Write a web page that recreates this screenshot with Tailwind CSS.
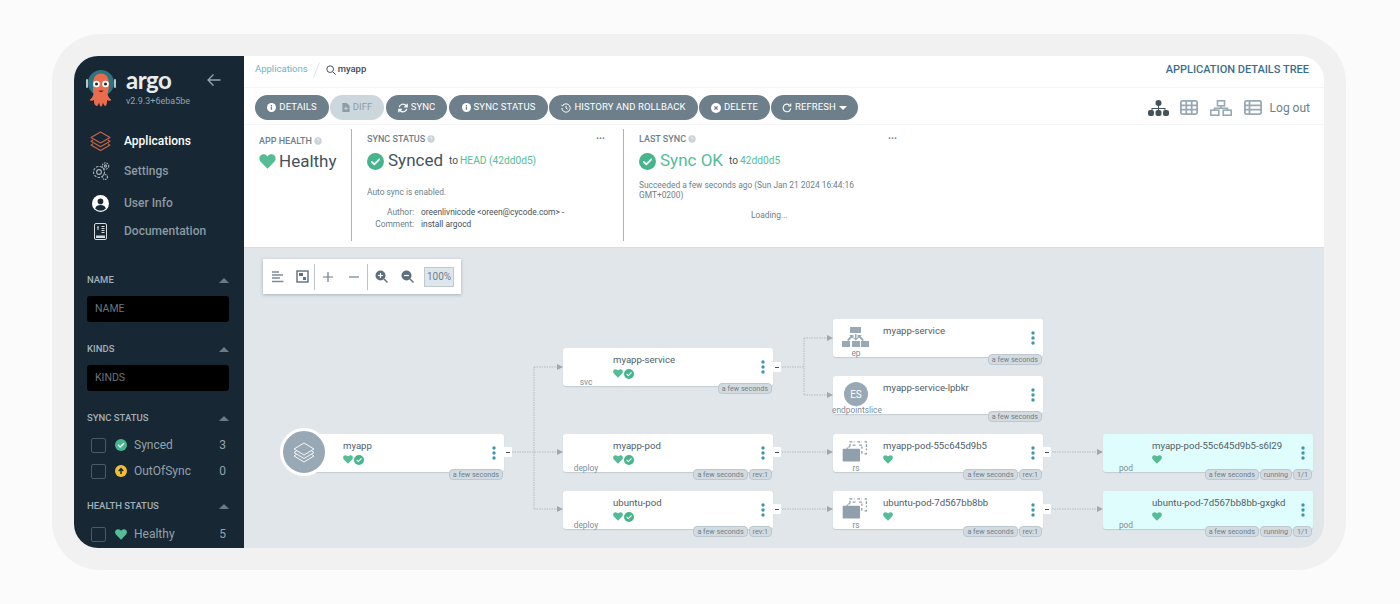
<!doctype html>
<html lang="en">
<head>
<meta charset="utf-8">
<title>Argo CD application details</title>
<script src="https://cdn.jsdelivr.net/npm/@tailwindcss/browser@4"></script>
</head>
<body class="w-[1400px] h-[604px] overflow-hidden bg-[#fbfbfb] font-['Roboto',sans-serif]">
<svg class="hidden" aria-hidden="true">
  <symbol id="heart" viewBox="0 0 24 22"><path fill="#55bd96" d="M12 21.5 2.300 11.600C-.6 8.700-.6 4.300 2 1.900c2.500-2.300 6.600-1.900 9 .6l1 1 1-1c2.400-2.500 6.500-2.900 9-.6 2.600 2.400 2.600 6.800-.3 9.700z"/></symbol>
  <symbol id="check" viewBox="0 0 24 24"><circle cx="12" cy="12" r="12" fill="#45b58c"/><path d="M6.800 12.500l3.500 3.500 7-7" fill="none" stroke="#fff" stroke-width="2.600" stroke-linecap="round" stroke-linejoin="round"/></symbol>
  <symbol id="dots" viewBox="0 0 4 14"><circle cx="2" cy="2" r="1.700" fill="#3f97a8"/><circle cx="2" cy="7" r="1.700" fill="#3f97a8"/><circle cx="2" cy="12" r="1.700" fill="#3f97a8"/></symbol>
  <symbol id="info" viewBox="0 0 24 24"><circle cx="12" cy="12" r="12" fill="currentColor"/><path d="M10 10h3.500v8H10zM10.200 5.500h3.300v3h-3.300z" fill="#6d7f8b"/></symbol>
  <symbol id="rs" viewBox="0 0 27 23"><path d="M8 6V1h5M16 1h5M24 1h2v9M26 13v1h-3M5 10V6.500h3M11 4.500h4M18 4.500h3v4M21 11v3" fill="none" stroke="#8f9fab" stroke-width="1.400" stroke-dasharray="3 1.600"/><rect x="0" y="8.500" width="19" height="14" rx="1" fill="#8f9fab"/></symbol>
  <symbol id="q" viewBox="0 0 24 24"><circle cx="12" cy="12" r="11" fill="#c9d2d8"/><path d="M9 9.500a3 3 0 1 1 4.500 2.600c-1 .6-1.500 1.200-1.500 2.400M12 17v1.500" fill="none" stroke="#fff" stroke-width="2"/></symbol>
</svg>

<main class="ml-[52px] mt-[34px] w-[1294px] h-[536px] rounded-[48px] bg-[#f1f1f1] p-[22px]">
  <div class="flex h-[492px] w-[1250px] overflow-hidden rounded-[24px] bg-white">

    <!-- Sidebar -->
    <aside class="w-[170px] shrink-0 overflow-hidden bg-[#172733] text-[#8b9aa5]">
      <div class="relative flex h-[72px] pl-[12px] pt-[14px]">
        <svg class="h-[38px] w-[30px] shrink-0" viewBox="0 0 30 38">
          <circle cx="15" cy="13" r="13" fill="#2f7280"/>
          <rect x="0" y="9" width="2" height="9" rx="1" fill="#b9c6cc"/><rect x="28" y="9" width="2" height="9" rx="1" fill="#b9c6cc"/>
          <path d="M7 15C7 7 10 3.500 15 3.500S23 7 23 15c0 4-1 7-1.500 9 .5 3 2.500 5 4 6-1.500 1.500-3.500.5-4.500 0 0 3 0 5-1.500 6-1.500 0-2-2-2.500-3.500-.5 2-1 4-2 4s-1.500-2-2-4c-.5 1.500-1 3.500-2.500 3.500C8 35 8 33 8 30c-1 .5-3 1.500-4.500 0 1.500-1 3.500-3 4-6C7 22 7 19 7 15z" fill="#e96d4c"/>
          <circle cx="10.500" cy="14" r="3.300" fill="#fff"/><circle cx="19.500" cy="14" r="3.300" fill="#fff"/>
          <circle cx="10.500" cy="14" r="1.500" fill="#172733"/><circle cx="19.500" cy="14" r="1.500" fill="#172733"/>
          <path d="M12.500 20.500c1.500 2.200 3.500 2.200 5 0z" fill="#5b2418"/>
        </svg>
        <div class="ml-[10px]">
          <div class="h-[24px] text-[24px] leading-[20px] font-bold tracking-[-0.5px] text-[#e8ecee] font-['Lato',sans-serif]">argo</div>
          <div class="mt-[1px] text-[9px] leading-[12px] text-[#94a3ae]">v2.9.3+6eba5be</div>
        </div>
        <svg class="absolute left-[133px] top-[17px] h-[14px] w-[14px]" viewBox="0 0 14 14" fill="none" stroke="#94a3ae" stroke-width="1.400"><path d="M13.500 7H1M6.500 1.500 1 7l5.500 5.500"/></svg>
      </div>

      <nav class="text-[12px] font-medium">
        <div class="flex h-[26px] items-center pl-[16px] text-white">
          <svg class="mr-[13px] h-[20px] w-[21px]" viewBox="0 0 21 20" fill="none" stroke="#c5654a" stroke-width="1.100" stroke-linejoin="round"><path d="M10.500 1 20 6.500l-9.500 5.500L1 6.500zM3 9 1 10.300 10.500 15.800 20 10.300 18 9M3 12.800l-2 1.300 9.500 5.500 9.500-5.500-2-1.300"/></svg>Applications
        </div>
        <div class="mt-[4px] flex h-[26px] items-center pl-[16px]">
          <svg class="mr-[13px] h-[20px] w-[21px]" viewBox="0 0 21 20" fill="none" stroke="#a9b4bc" stroke-width="1.100"><circle cx="9" cy="11" r="5.500" stroke-dasharray="2.500 1.200"/><circle cx="9" cy="11" r="2.400"/><circle cx="15.500" cy="5" r="3.200" stroke-dasharray="1.700 .9"/><circle cx="15.500" cy="5" r="1.100"/><circle cx="15" cy="16" r="2.500" stroke-dasharray="1.500 .8"/></svg>Settings
        </div>
        <div class="mt-[6px] flex h-[26px] items-center pl-[16px]">
          <svg class="ml-[2px] mr-[15px] h-[17px] w-[17px]" viewBox="0 0 24 24"><circle cx="12" cy="12" r="12" fill="#fff"/><circle cx="12" cy="9" r="4" fill="#172733"/><path d="M4.500 19c1-4 4-5 7.500-5s6.500 1 7.500 5a10 10 0 0 1-15 0z" fill="#172733"/></svg>User Info
        </div>
        <div class="mt-[2px] flex h-[26px] items-center pl-[16px]">
          <svg class="ml-[4px] mr-[17px] h-[17px] w-[13px]" viewBox="0 0 13 17" fill="none" stroke="#d5dbdf" stroke-width="1"><rect x=".5" y=".5" width="12" height="16" rx="1.500"/><path d="M3 4h2M4 4v3M7.500 3.500h3M7.500 5.500h3M7.500 7.500h3M7.500 9.500h3"/><rect x="2" y="12.500" width="9" height="2.500" fill="#d5dbdf" stroke="none"/></svg>Documentation
        </div>
      </nav>

      <section class="mt-[30px] pl-[13px] pr-[15px] text-[9.500px] font-medium">
        <div class="flex h-[12px] items-center justify-between leading-none text-[#a3b0b9]">NAME<span class="h-0 w-0 border-x-[5px] border-b-[5px] border-x-transparent border-b-[#6a7a86]"></span></div>
        <div class="mt-[10px] flex h-[26px] items-center rounded-[3px] bg-black pl-[8px] text-[10.500px] font-normal text-[#69767f]">NAME</div>
      </section>
      <section class="mt-[21px] pl-[13px] pr-[15px] text-[9.500px] font-medium">
        <div class="flex h-[12px] items-center justify-between leading-none text-[#a3b0b9]">KINDS<span class="h-0 w-0 border-x-[5px] border-b-[5px] border-x-transparent border-b-[#6a7a86]"></span></div>
        <div class="mt-[10px] flex h-[26px] items-center rounded-[3px] bg-black pl-[8px] text-[10.500px] font-normal text-[#69767f]">KINDS</div>
      </section>
      <section class="mt-[21px] pl-[13px] pr-[15px]">
        <div class="flex h-[12px] items-center justify-between text-[9.500px] font-medium leading-none text-[#a3b0b9]">SYNC STATUS<span class="h-0 w-0 border-x-[5px] border-b-[5px] border-x-transparent border-b-[#6a7a86]"></span></div>
        <div class="mt-[13px] flex h-[16px] items-center text-[12px] text-[#93a2ac]">
          <span class="ml-[4px] h-[15px] w-[15px] rounded-[2px] border border-[#4b5a65]"></span>
          <svg class="ml-[9px] mr-[7px] h-[12px] w-[12px]"><use href="#check"/></svg>Synced<span class="ml-auto mr-[3px]">3</span>
        </div>
        <div class="mt-[10px] flex h-[16px] items-center text-[12px] text-[#93a2ac]">
          <span class="ml-[4px] h-[15px] w-[15px] rounded-[2px] border border-[#4b5a65]"></span>
          <svg class="ml-[9px] mr-[7px] h-[12px] w-[12px]" viewBox="0 0 24 24"><circle cx="12" cy="12" r="12" fill="#f4c030"/><path d="M12 18V8M7.500 12 12 7l4.500 5" fill="none" stroke="#172733" stroke-width="3"/></svg>OutOfSync<span class="ml-auto mr-[3px]">0</span>
        </div>
      </section>
      <section class="mt-[21px] pl-[13px] pr-[15px]">
        <div class="flex h-[12px] items-center justify-between text-[9.500px] font-medium leading-none text-[#a3b0b9]">HEALTH STATUS<span class="h-0 w-0 border-x-[5px] border-b-[5px] border-x-transparent border-b-[#6a7a86]"></span></div>
        <div class="mt-[14px] flex h-[16px] items-center text-[12px] text-[#93a2ac]">
          <span class="ml-[4px] h-[15px] w-[15px] rounded-[2px] border border-[#4b5a65]"></span>
          <svg class="ml-[9px] mr-[7px] h-[11px] w-[12px]"><use href="#heart"/></svg>Healthy<span class="ml-auto mr-[3px]">5</span>
        </div>
      </section>
    </aside>

    <!-- Main column -->
    <div class="flex min-w-0 flex-1 flex-col">
      <header class="flex h-[32px] shrink-0 items-center border-b border-[#f3f5f6] pb-[3px] pl-[11px] pr-[15px]">
        <span class="mb-[2px] text-[9.500px] text-[#6db3c4]">Applications</span>
        <span class="ml-[8px] h-[16px] w-px rotate-[22deg] bg-[#dfe4e7]"></span>
        <svg class="ml-[9px] h-[10px] w-[10px]" viewBox="0 0 12 12" fill="none" stroke="#44525c" stroke-width="1.200"><circle cx="5" cy="5" r="4"/><path d="m8 8 3.500 3.500"/></svg>
        <span class="ml-[2px] mb-[2px] text-[9.500px] font-medium text-[#3f4c55]">myapp</span>
        <span class="ml-auto text-[11px] font-medium text-[#3c6e8a]">APPLICATION DETAILS TREE</span>
      </header>

      <div class="flex h-[37px] shrink-0 items-center border-b border-[#f3f5f6] pl-[11px] pr-[14px] pt-[3px] text-[9.500px] tracking-[0.1px] text-white">
        <div class="flex h-[25px] items-stretch">
          <span class="flex w-[74px] items-center justify-center gap-[3px] rounded-full bg-[#6d7f8b]"><svg class="h-[9px] w-[9px] text-white"><use href="#info"/></svg>DETAILS</span>
          <span class="ml-[1px] flex w-[54px] items-center justify-center gap-[3px] rounded-full bg-[#ccd6dd] text-[#8e9ca6]"><svg class="h-[9px] w-[8px]" viewBox="0 0 8 10"><path d="M0 0h5l3 3v7H0z" fill="#8e9ca6"/><path d="M4 4v4M2 6h4" stroke="#ccd6dd"/></svg>DIFF</span>
          <span class="ml-[2px] flex w-[61px] items-center justify-center gap-[3px] rounded-full bg-[#6d7f8b]"><svg class="h-[10px] w-[10px]" viewBox="0 0 12 12" fill="none" stroke="#fff" stroke-width="1.500"><path d="M1.500 5a4.600 4.600 0 0 1 8-2l1.500 1.500M10.500 7a4.600 4.600 0 0 1-8 2L1 7.500M11 1v3.500H7.500M1 11V7.500h3.500"/></svg>SYNC</span>
          <span class="ml-[2px] flex w-[99px] items-center justify-center gap-[3px] rounded-full bg-[#6d7f8b]"><svg class="h-[9px] w-[9px] text-white"><use href="#info"/></svg>SYNC STATUS</span>
          <span class="ml-[1px] flex w-[149px] items-center justify-center gap-[3px] rounded-full bg-[#6d7f8b]"><svg class="h-[10px] w-[10px]" viewBox="0 0 12 12" fill="none" stroke="#fff" stroke-width="1.200"><path d="M2 3a5 5 0 1 1-1 3M.5 2.500 2 3.500l1-1.500M6 3.500V6l2 1.500"/></svg>HISTORY AND ROLLBACK</span>
          <span class="ml-[1px] flex w-[71px] items-center justify-center gap-[3px] rounded-full bg-[#6d7f8b]"><svg class="h-[10px] w-[10px]" viewBox="0 0 24 24"><circle cx="12" cy="12" r="12" fill="#fff"/><path d="m8 8 8 8m0-8-8 8" stroke="#6d7f8b" stroke-width="3"/></svg>DELETE</span>
          <span class="ml-[1px] flex w-[87px] items-center justify-center gap-[3px] rounded-full bg-[#6d7f8b]"><svg class="h-[10px] w-[10px]" viewBox="0 0 12 12" fill="none" stroke="#fff" stroke-width="1.300"><path d="M10.500 6.500A4.600 4.600 0 1 1 9 2.500M10.500.5v3H7.500"/></svg>REFRESH<span class="h-0 w-0 border-x-[4px] border-t-[4px] border-x-transparent border-t-white"></span></span>
        </div>
        <div class="ml-auto flex items-center">
          <svg class="h-[16px] w-[21px]" viewBox="0 0 21 16" fill="#44525c"><circle cx="10.500" cy="3" r="3"/><path d="M10 5h1v5h-1zM3.500 8h14v2.500h-1V9h-12v1.500h-1z"/><rect x="0" y="10" width="6" height="6" rx="2"/><rect x="7.500" y="10" width="6" height="6" rx="2"/><rect x="15" y="10" width="6" height="6" rx="2"/></svg>
          <svg class="ml-[11px] h-[15px] w-[18px]" viewBox="0 0 18 15" fill="none" stroke="#98a9b5" stroke-width="1.800"><rect x=".9" y=".9" width="16.200" height="13.200" rx="1.500"/><path d="M.5 5.300h17M.5 9.700h17M6.300.5v14M11.700.5v14"/></svg>
          <svg class="ml-[12px] h-[16px] w-[22px]" viewBox="0 0 22 16" fill="none" stroke="#98a9b5" stroke-width="1.600"><rect x="7.500" y=".8" width="7" height="5"/><rect x=".8" y="10.200" width="8" height="5"/><rect x="13.200" y="10.200" width="8" height="5"/><path d="M11 5.700v2.500M4.500 10.300V8.200h13v2.100"/></svg>
          <svg class="ml-[12px] h-[15px] w-[18px]" viewBox="0 0 18 15" fill="none" stroke="#98a9b5" stroke-width="1.800"><rect x=".9" y=".9" width="16.200" height="13.200" rx="1.500"/><path d="M.5 5.300h17M.5 9.700h17M5.500.5v14"/></svg>
          <span class="ml-[8px] text-[12px] tracking-normal text-[#6d7f8b]">Log out</span>
        </div>
      </div>

      <!-- Status panels -->
      <div class="flex h-[123px] shrink-0 items-start border-b border-[#d8dee2] pt-[4px] text-[#6d7f8b]">
        <div class="w-[107px] shrink-0 pl-[15px]">
          <div class="mt-[6px] flex items-center gap-[2px] text-[9px] font-medium leading-[12px]">APP HEALTH<svg class="h-[8px] w-[8px]"><use href="#q"/></svg></div>
          <div class="mt-[2px] flex items-center gap-[3px] text-[17px] leading-[24px] text-[#44525c]"><svg class="h-[15px] w-[17px]"><use href="#heart"/></svg>Healthy</div>
        </div>
        <div class="relative h-[112px] w-[272px] shrink-0 border-l border-[#a9b3ba] pl-[15px]">
          <div class="mt-[4px] flex items-center gap-[2px] text-[9px] font-medium leading-[12px]">SYNC STATUS<svg class="h-[8px] w-[8px]"><use href="#q"/></svg></div>
          <span class="absolute left-[244px] top-[5px] text-[10px] font-bold leading-[10px]">···</span>
          <div class="mt-[4px] flex h-[24px] items-center text-[#44525c]">
            <svg class="mr-[4px] h-[17px] w-[17px]"><use href="#check"/></svg><span class="text-[17px]">Synced</span>
            <span class="ml-[6px] text-[10.200px]">to</span><span class="ml-[2px] text-[10.200px] text-[#55bd96]">HEAD (42dd0d5)</span>
          </div>
          <p class="mt-[13px] text-[8.400px] leading-[12px]">Auto sync is enabled.</p>
          <dl class="mt-[8px] grid grid-cols-[47px_1fr] gap-x-[7px] text-[8.400px] leading-[12px]">
            <dt class="text-right">Author:</dt><dd class="text-[#44525c]">oreenlivnicode &lt;oreen@cycode.com&gt; -</dd>
            <dt class="text-right">Comment:</dt><dd class="text-[#44525c]">install argocd</dd>
          </dl>
        </div>
        <div class="relative h-[112px] w-[300px] shrink-0 border-l border-[#a9b3ba] pl-[15px]">
          <div class="mt-[4px] flex items-center gap-[2px] text-[9px] font-medium leading-[12px]">LAST SYNC<svg class="h-[8px] w-[8px]"><use href="#q"/></svg></div>
          <span class="absolute left-[264px] top-[5px] text-[10px] font-bold leading-[10px]">···</span>
          <div class="mt-[4px] flex h-[24px] items-center">
            <svg class="mr-[4px] h-[17px] w-[17px]"><use href="#check"/></svg><span class="text-[17px] text-[#55bd96]">Sync OK</span>
            <span class="ml-[6px] text-[10.200px] text-[#44525c]">to</span><span class="ml-[2px] text-[10.200px] text-[#55bd96]">42dd0d5</span>
          </div>
          <p class="mt-[7px] w-[225px] text-[8.400px] leading-[10px]">Succeeded a few seconds ago (Sun Jan 21 2024 16:44:16 GMT+0200)</p>
          <p class="mt-[10px] ml-[112px] text-[8.400px] leading-[10px]">Loading...</p>
        </div>
      </div>

      <!-- Graph canvas -->
      <div class="relative min-h-0 flex-1 overflow-hidden bg-[#e0e6ea]">
        <div class="absolute left-[19px] top-[11px] flex h-[35px] w-[198px] items-center bg-white shadow-[0_1px_3px_rgba(90,110,125,.45)]">
          <svg class="ml-[9px] h-[12px] w-[12px]" viewBox="0 0 12 12" stroke="#7d8d98" stroke-width="1.300"><path d="M0 1h7M0 4h11M0 7h8M0 10.500h11.500"/></svg>
          <svg class="ml-[12px] h-[13px] w-[13px]" viewBox="0 0 13 13"><rect x="1" y="1" width="11" height="11" fill="none" stroke="#5f707c" stroke-width="1.400"/><path d="M3 3h4v3H3zM7 7h3v3H7z" fill="#5f707c"/></svg>
          <span class="ml-[5px] h-[26px] w-px bg-[#b9c3ca]"></span>
          <svg class="ml-[8px] h-[10px] w-[10px]" viewBox="0 0 10 10" stroke="#6d7f8b" stroke-width="1.200"><path d="M5 0v10M0 5h10"/></svg>
          <svg class="ml-[16px] h-[10px] w-[10px]" viewBox="0 0 10 10" stroke="#6d7f8b" stroke-width="1.200"><path d="M0 5h10"/></svg>
          <span class="ml-[8px] h-[26px] w-px bg-[#b9c3ca]"></span>
          <svg class="ml-[7px] h-[13px] w-[13px]" viewBox="0 0 13 13"><circle cx="5.500" cy="5.500" r="5" fill="#5f707c"/><path d="M3 5.500h5M5.500 3v5" stroke="#fff" stroke-width="1.200"/><path d="m9 9 3.500 3.500" stroke="#5f707c" stroke-width="1.400"/></svg>
          <svg class="ml-[13px] h-[13px] w-[13px]" viewBox="0 0 13 13"><circle cx="5.500" cy="5.500" r="5" fill="#5f707c"/><path d="M3 5.500h5" stroke="#fff" stroke-width="1.200"/><path d="m9 9 3.500 3.500" stroke="#5f707c" stroke-width="1.400"/></svg>
          <span class="ml-[10px] flex h-[20px] w-[30px] items-center justify-center border border-[#bfc9d0] bg-[#dee6eb] text-[10px] text-[#6d7f8b]">100%</span>
        </div>

        <svg class="absolute inset-0 h-full w-full" viewBox="0 0 1080 300" fill="none">
          <g stroke="#a5b1b9" stroke-width=".8" stroke-dasharray="1.500 1">
            <path d="M268 204H312M290 119V261M290 119H313M290 261H313"/>
            <path d="M538 119H560M560 90V147M560 90H583M560 147H583"/>
            <path d="M538 204H583M538 261H583"/>
            <path d="M808 204H853M808 261H853"/>
          </g>
          <g fill="#a0a8ad">
            <path d="M313 116l6 3-6 3zM313 201l6 3-6 3zM313 258l6 3-6 3z"/>
            <path d="M583 87l6 3-6 3zM583 144l6 3-6 3zM583 201l6 3-6 3zM583 258l6 3-6 3z"/>
            <path d="M853 201l6 3-6 3zM853 258l6 3-6 3z"/>
          </g>
        </svg>

        <!-- myapp -->
        <div class="absolute left-[52px] top-[186px] flex h-[38px] w-[208px] rounded-[3px] bg-white shadow-[0_1px_1px_rgba(90,110,125,.2)]">
          <div class="min-w-0 flex-1 pl-[47px]"><div class="mt-[5px] text-[9.600px] leading-[13px] text-[#4f5d67]">myapp</div><div class="mt-[3px] flex gap-[1px]"><svg class="h-[9px] w-[10px]"><use href="#heart"/></svg><svg class="h-[10px] w-[10px]"><use href="#check"/></svg></div></div>
          <svg class="mr-[8px] mt-[12px] h-[14px] w-[4px]"><use href="#dots"/></svg>
          <span class="absolute -right-[8px] top-[13px] flex h-[10px] w-[8px] items-center justify-center rounded-r-[1px] bg-white"><span class="h-px w-[4px] bg-[#44525c]"></span></span>
          <div class="absolute -bottom-[8px] right-[1px] flex gap-px text-[7.200px]"><span class="rounded-[4px] border border-[#bcc7cf] bg-[#d3dbe1] px-[3px] leading-[9px] text-[#6d7f8b]">a few seconds</span></div>
        </div>
        <div class="absolute left-[36px] top-[180px] flex h-[48px] w-[48px] items-center justify-center rounded-full border-[3px] border-white bg-[#98a9b5]">
          <svg class="h-[24px] w-[24px]" viewBox="0 0 24 24" fill="none" stroke="#fff" stroke-width=".9" stroke-linejoin="round"><path d="M12 3l10 6-10 6L2 9zM4.500 11 2 12.500l10 6 10-6L19.500 11M4.500 14.500 2 16l10 6 10-6-2.500-1.500"/></svg>
        </div>

        <!-- myapp-service -->
        <div class="absolute left-[319px] top-[100px] flex h-[38px] w-[210px] rounded-[3px] bg-white shadow-[0_1px_1px_rgba(90,110,125,.2)]">
          <div class="relative w-[50px] shrink-0"><span class="absolute left-0 top-[30px] w-[46px] text-center text-[8.400px] leading-[9px] text-[#7d8d98]">svc</span></div>
          <div class="min-w-0 flex-1"><div class="mt-[5px] text-[9.600px] leading-[13px] text-[#4f5d67]">myapp-service</div><div class="mt-[3px] flex gap-[1px]"><svg class="h-[9px] w-[10px]"><use href="#heart"/></svg><svg class="h-[10px] w-[10px]"><use href="#check"/></svg></div></div>
          <svg class="mr-[8px] mt-[12px] h-[14px] w-[4px]"><use href="#dots"/></svg>
          <span class="absolute -right-[8px] top-[14px] flex h-[10px] w-[8px] items-center justify-center rounded-r-[1px] bg-white"><span class="h-px w-[4px] bg-[#44525c]"></span></span>
          <div class="absolute -bottom-[8px] right-[1px] flex gap-px text-[7.200px]"><span class="rounded-[4px] border border-[#bcc7cf] bg-[#d3dbe1] px-[3px] leading-[9px] text-[#6d7f8b]">a few seconds</span></div>
        </div>

        <!-- myapp-pod -->
        <div class="absolute left-[319px] top-[186px] flex h-[38px] w-[210px] rounded-[3px] bg-white shadow-[0_1px_1px_rgba(90,110,125,.2)]">
          <div class="relative w-[50px] shrink-0"><span class="absolute left-0 top-[30px] w-[46px] text-center text-[8.400px] leading-[9px] text-[#7d8d98]">deploy</span></div>
          <div class="min-w-0 flex-1"><div class="mt-[5px] text-[9.600px] leading-[13px] text-[#4f5d67]">myapp-pod</div><div class="mt-[3px] flex gap-[1px]"><svg class="h-[9px] w-[10px]"><use href="#heart"/></svg><svg class="h-[10px] w-[10px]"><use href="#check"/></svg></div></div>
          <svg class="mr-[8px] mt-[12px] h-[14px] w-[4px]"><use href="#dots"/></svg>
          <span class="absolute -right-[8px] top-[13px] flex h-[10px] w-[8px] items-center justify-center rounded-r-[1px] bg-white"><span class="h-px w-[4px] bg-[#44525c]"></span></span>
          <div class="absolute -bottom-[8px] right-[1px] flex gap-px text-[7.200px]"><span class="rounded-[4px] border border-[#bcc7cf] bg-[#d3dbe1] px-[3px] leading-[9px] text-[#6d7f8b]">a few seconds</span><span class="rounded-[4px] border border-[#bcc7cf] bg-[#d3dbe1] px-[3px] leading-[9px] text-[#6d7f8b]">rev:1</span></div>
        </div>

        <!-- ubuntu-pod -->
        <div class="absolute left-[319px] top-[243px] flex h-[38px] w-[210px] rounded-[3px] bg-white shadow-[0_1px_1px_rgba(90,110,125,.2)]">
          <div class="relative w-[50px] shrink-0"><span class="absolute left-0 top-[30px] w-[46px] text-center text-[8.400px] leading-[9px] text-[#7d8d98]">deploy</span></div>
          <div class="min-w-0 flex-1"><div class="mt-[5px] text-[9.600px] leading-[13px] text-[#4f5d67]">ubuntu-pod</div><div class="mt-[3px] flex gap-[1px]"><svg class="h-[9px] w-[10px]"><use href="#heart"/></svg><svg class="h-[10px] w-[10px]"><use href="#check"/></svg></div></div>
          <svg class="mr-[8px] mt-[12px] h-[14px] w-[4px]"><use href="#dots"/></svg>
          <span class="absolute -right-[8px] top-[13px] flex h-[10px] w-[8px] items-center justify-center rounded-r-[1px] bg-white"><span class="h-px w-[4px] bg-[#44525c]"></span></span>
          <div class="absolute -bottom-[8px] right-[1px] flex gap-px text-[7.200px]"><span class="rounded-[4px] border border-[#bcc7cf] bg-[#d3dbe1] px-[3px] leading-[9px] text-[#6d7f8b]">a few seconds</span><span class="rounded-[4px] border border-[#bcc7cf] bg-[#d3dbe1] px-[3px] leading-[9px] text-[#6d7f8b]">rev:1</span></div>
        </div>

        <!-- ep -->
        <div class="absolute left-[589px] top-[71px] flex h-[38px] w-[210px] rounded-[3px] bg-white shadow-[0_1px_1px_rgba(90,110,125,.2)]">
          <div class="relative w-[50px] shrink-0">
            <svg class="absolute left-[9px] top-[8px] h-[20px] w-[27px]" viewBox="0 0 27 20" fill="#98a9b5"><rect x="8" y="0" width="11" height="6"/><rect x="0" y="14" width="8" height="6"/><rect x="10" y="14" width="8" height="6"/><rect x="19" y="14" width="8" height="6"/><path d="M13 7h1.500v4H16l-2.200 2.500L11.500 11H13zM5 13l3.500-4-1.500-1h4.500v4L10 10.500 6.500 14zM22 13l-3.500-4 1.500-1h-4.500v4l1.500-1.500 3.500 3.500z"/></svg>
            <span class="absolute left-0 top-[30px] w-[46px] text-center text-[8.400px] leading-[9px] text-[#7d8d98]">ep</span>
          </div>
          <div class="min-w-0 flex-1"><div class="mt-[5px] text-[9.600px] leading-[13px] text-[#4f5d67]">myapp-service</div></div>
          <svg class="mr-[8px] mt-[12px] h-[14px] w-[4px]"><use href="#dots"/></svg>
          <div class="absolute -bottom-[8px] right-[1px] flex gap-px text-[7.200px]"><span class="rounded-[4px] border border-[#bcc7cf] bg-[#d3dbe1] px-[3px] leading-[9px] text-[#6d7f8b]">a few seconds</span></div>
        </div>

        <!-- ES -->
        <div class="absolute left-[589px] top-[128px] flex h-[38px] w-[210px] rounded-[3px] bg-white shadow-[0_1px_1px_rgba(90,110,125,.2)]">
          <div class="relative w-[50px] shrink-0">
            <span class="absolute left-[11px] top-[6px] flex h-[24px] w-[24px] items-center justify-center rounded-full bg-[#98a9b5] text-[10px] text-white">ES</span>
            <span class="absolute left-[-1px] top-[30px] w-[50px] whitespace-nowrap text-center text-[8.400px] leading-[9px] text-[#7d8d98]">endpointslice</span>
          </div>
          <div class="min-w-0 flex-1"><div class="mt-[5px] text-[9.600px] leading-[13px] text-[#4f5d67]">myapp-service-lpbkr</div></div>
          <svg class="mr-[8px] mt-[12px] h-[14px] w-[4px]"><use href="#dots"/></svg>
          <div class="absolute -bottom-[8px] right-[1px] flex gap-px text-[7.200px]"><span class="rounded-[4px] border border-[#bcc7cf] bg-[#d3dbe1] px-[3px] leading-[9px] text-[#6d7f8b]">a few seconds</span></div>
        </div>

        <!-- rs 1 -->
        <div class="absolute left-[589px] top-[186px] flex h-[38px] w-[210px] rounded-[3px] bg-white shadow-[0_1px_1px_rgba(90,110,125,.2)]">
          <div class="relative w-[50px] shrink-0">
            <svg class="absolute left-[9px] top-[7px] h-[21px] w-[26px]"><use href="#rs"/></svg>
            <span class="absolute left-0 top-[30px] w-[46px] text-center text-[8.400px] leading-[9px] text-[#7d8d98]">rs</span>
          </div>
          <div class="min-w-0 flex-1"><div class="mt-[5px] text-[9.600px] leading-[13px] text-[#4f5d67]">myapp-pod-55c645d9b5</div><div class="mt-[3px] flex"><svg class="h-[9px] w-[10px]"><use href="#heart"/></svg></div></div>
          <svg class="mr-[8px] mt-[12px] h-[14px] w-[4px]"><use href="#dots"/></svg>
          <span class="absolute -right-[8px] top-[13px] flex h-[10px] w-[8px] items-center justify-center rounded-r-[1px] bg-white"><span class="h-px w-[4px] bg-[#44525c]"></span></span>
          <div class="absolute -bottom-[8px] right-[1px] flex gap-px text-[7.200px]"><span class="rounded-[4px] border border-[#bcc7cf] bg-[#d3dbe1] px-[3px] leading-[9px] text-[#6d7f8b]">a few seconds</span><span class="rounded-[4px] border border-[#bcc7cf] bg-[#d3dbe1] px-[3px] leading-[9px] text-[#6d7f8b]">rev:1</span></div>
        </div>

        <!-- rs 2 -->
        <div class="absolute left-[589px] top-[243px] flex h-[38px] w-[210px] rounded-[3px] bg-white shadow-[0_1px_1px_rgba(90,110,125,.2)]">
          <div class="relative w-[50px] shrink-0">
            <svg class="absolute left-[9px] top-[7px] h-[21px] w-[26px]"><use href="#rs"/></svg>
            <span class="absolute left-0 top-[30px] w-[46px] text-center text-[8.400px] leading-[9px] text-[#7d8d98]">rs</span>
          </div>
          <div class="min-w-0 flex-1"><div class="mt-[5px] text-[9.600px] leading-[13px] text-[#4f5d67]">ubuntu-pod-7d567bb8bb</div><div class="mt-[3px] flex"><svg class="h-[9px] w-[10px]"><use href="#heart"/></svg></div></div>
          <svg class="mr-[8px] mt-[12px] h-[14px] w-[4px]"><use href="#dots"/></svg>
          <span class="absolute -right-[8px] top-[13px] flex h-[10px] w-[8px] items-center justify-center rounded-r-[1px] bg-white"><span class="h-px w-[4px] bg-[#44525c]"></span></span>
          <div class="absolute -bottom-[8px] right-[1px] flex gap-px text-[7.200px]"><span class="rounded-[4px] border border-[#bcc7cf] bg-[#d3dbe1] px-[3px] leading-[9px] text-[#6d7f8b]">a few seconds</span><span class="rounded-[4px] border border-[#bcc7cf] bg-[#d3dbe1] px-[3px] leading-[9px] text-[#6d7f8b]">rev:1</span></div>
        </div>

        <!-- pod 1 -->
        <div class="absolute left-[859px] top-[186px] flex h-[38px] w-[210px] rounded-[3px] bg-[#e0fdfd] shadow-[0_1px_1px_rgba(90,110,125,.2)]">
          <div class="relative w-[49px] shrink-0"><span class="absolute left-0 top-[30px] w-[46px] text-center text-[8.400px] leading-[9px] text-[#7d8d98]">pod</span></div>
          <div class="min-w-0 flex-1"><div class="mt-[5px] text-[9.600px] leading-[13px] text-[#4f5d67]">myapp-pod-55c645d9b5-s6l29</div><div class="mt-[3px] flex"><svg class="h-[9px] w-[10px]"><use href="#heart"/></svg></div></div>
          <svg class="mr-[8px] mt-[12px] h-[14px] w-[4px]"><use href="#dots"/></svg>
          <div class="absolute -bottom-[8px] right-[1px] flex gap-px text-[7.200px]"><span class="rounded-[4px] border border-[#bcc7cf] bg-[#d3dbe1] px-[3px] leading-[9px] text-[#6d7f8b]">a few seconds</span><span class="rounded-[4px] border border-[#bcc7cf] bg-[#d3dbe1] px-[3px] leading-[9px] text-[#6d7f8b]">running</span><span class="rounded-[4px] border border-[#bcc7cf] bg-[#d3dbe1] px-[3px] leading-[9px] text-[#6d7f8b]">1/1</span></div>
        </div>

        <!-- pod 2 -->
        <div class="absolute left-[859px] top-[243px] flex h-[38px] w-[210px] rounded-[3px] bg-[#e0fdfd] shadow-[0_1px_1px_rgba(90,110,125,.2)]">
          <div class="relative w-[49px] shrink-0"><span class="absolute left-0 top-[30px] w-[46px] text-center text-[8.400px] leading-[9px] text-[#7d8d98]">pod</span></div>
          <div class="min-w-0 flex-1"><div class="mt-[5px] text-[9.600px] leading-[13px] text-[#4f5d67]">ubuntu-pod-7d567bb8bb-gxgkd</div><div class="mt-[3px] flex"><svg class="h-[9px] w-[10px]"><use href="#heart"/></svg></div></div>
          <svg class="mr-[8px] mt-[12px] h-[14px] w-[4px]"><use href="#dots"/></svg>
          <div class="absolute -bottom-[8px] right-[1px] flex gap-px text-[7.200px]"><span class="rounded-[4px] border border-[#bcc7cf] bg-[#d3dbe1] px-[3px] leading-[9px] text-[#6d7f8b]">a few seconds</span><span class="rounded-[4px] border border-[#bcc7cf] bg-[#d3dbe1] px-[3px] leading-[9px] text-[#6d7f8b]">running</span><span class="rounded-[4px] border border-[#bcc7cf] bg-[#d3dbe1] px-[3px] leading-[9px] text-[#6d7f8b]">1/1</span></div>
        </div>
      </div>
    </div>
  </div>
</main>
</body>
</html>
